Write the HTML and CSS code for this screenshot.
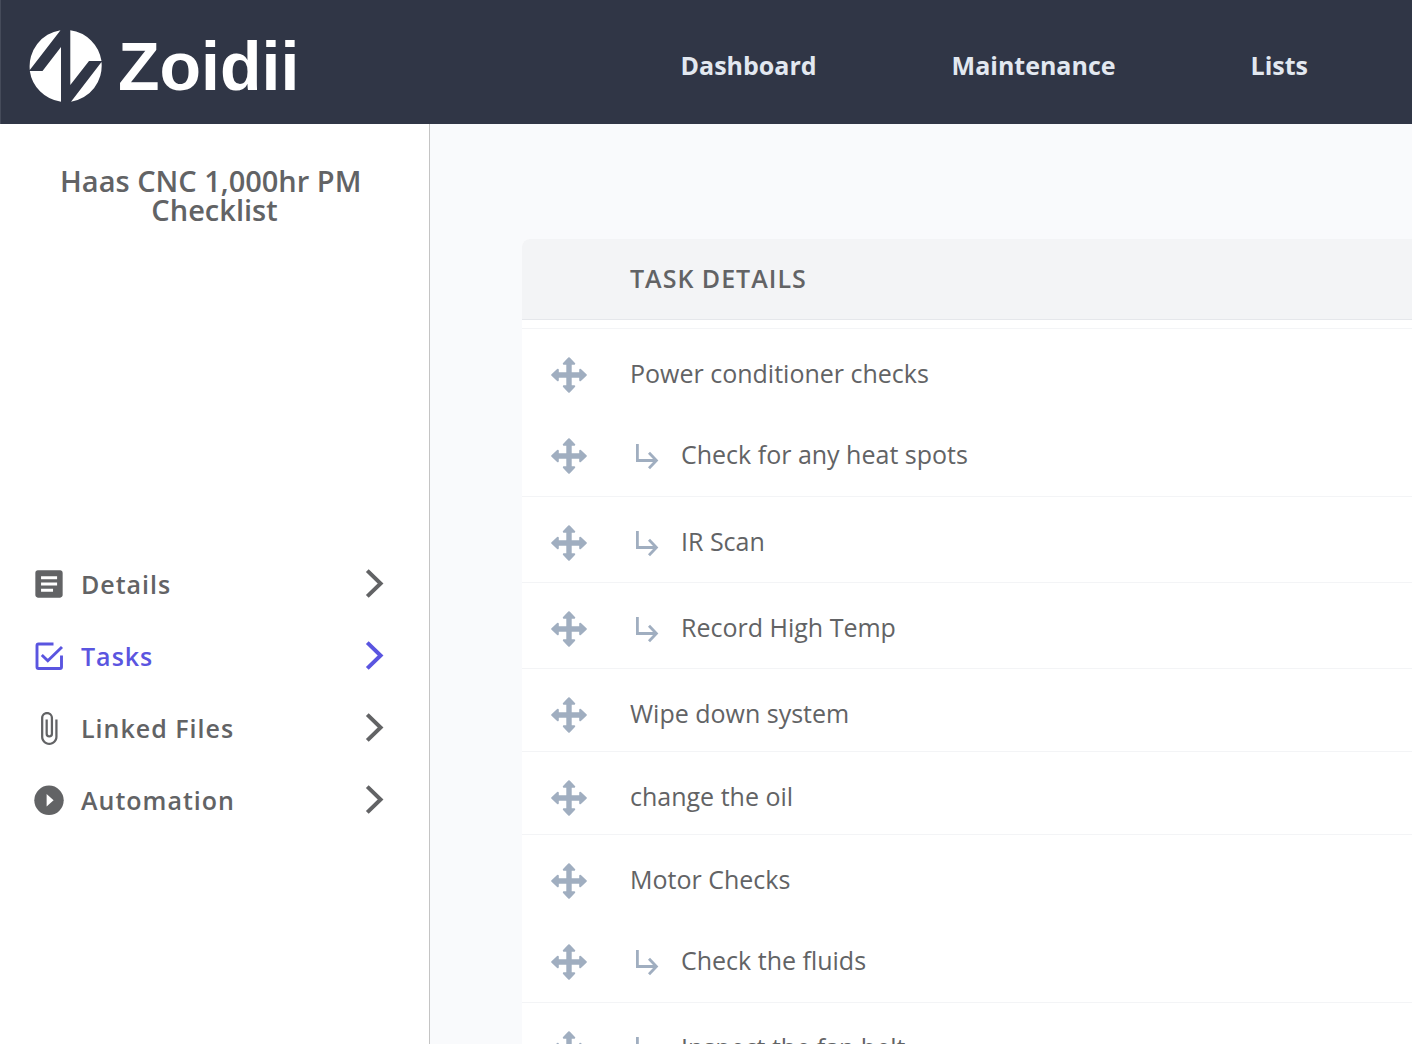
FILE: index.html
```html
<!DOCTYPE html>
<html lang="en">
<head>
  <meta charset="UTF-8" />
  <meta name="viewport" content="width=device-width, initial-scale=1.0" />
  <title>Zoidii - Tasks</title>
  <link rel="stylesheet" href="styles.css">
</head>
<body>
  <!-- shared icons -->
  <svg class="sprite" aria-hidden="true">
    <symbol id="move" viewBox="0 0 36 36">
      <path d="M18 3v30M3 18h30" fill="none" stroke="currentColor" stroke-width="5.4"/>
      <path d="M18 1.2l5.2 5.6H12.8zM18 34.8l5.2-5.6H12.8zM1.2 18l5.6 5.2V12.8zM34.8 18l-5.6 5.2V12.8z" fill="currentColor" stroke="currentColor" stroke-width="2" stroke-linejoin="round"/>
    </symbol>
    <symbol id="sub" viewBox="0 0 24 28">
      <path d="M2.4 1v16.5H20.6M14 9.8l7.4 7.7-7.4 7.7" fill="none" stroke="currentColor" stroke-width="2.8"/>
    </symbol>
    <symbol id="chevron" viewBox="0 0 20 30">
      <path d="M2.3 1.6L15.6 14.5 2.3 27.4" fill="none" stroke="currentColor" stroke-width="4"/>
    </symbol>
  </svg>

  <header class="topbar">
    <a class="logo" href="#">
      <svg class="logo-mark" viewBox="0 0 73 72" aria-hidden="true">
        <path d="M31.5 .2L.8 40A36.5 36.5 0 0 1 31.5 .2zM.8 41H13.5L32 17V71.8A36.5 36.5 0 0 1 .8 41zM41.3 .2A36.5 36.5 0 0 1 72.5 31H60L41.3 55zM72.5 32A36.5 36.5 0 0 1 42 71.8z" fill="#fff"/>
      </svg>
      <span>Zoidii</span>
    </a>
    <nav class="topnav">
      <a href="#">Dashboard</a>
      <a href="#">Maintenance</a>
      <a href="#">Lists</a>
    </nav>
  </header>

  <div class="layout">
    <aside class="sidebar">
      <h1>Haas CNC 1,000hr PM&nbsp; Checklist</h1>
      <nav class="sidenav">
        <a href="#">
          <svg class="icon" viewBox="0 0 24 24"><path d="M19.4 2.9H4.6C3.6 2.9 2.9 3.6 2.9 4.6v14.8c0 1 .7 1.7 1.7 1.7h14.8c1 0 1.7-.7 1.7-1.7V4.6c0-1-.7-1.7-1.7-1.7zM14.7 17.2H6.7v-2h8zM17.4 13H6.7v-2h10.7zM17.4 8.8H6.7v-2h10.7z" fill="currentColor"/></svg>
          <span>Details</span>
          <svg class="chevron"><use href="#chevron"/></svg>
        </a>
        <a href="#" class="active">
          <svg class="icon" viewBox="0 0 36 36"><path d="M22.5 6H7.5Q6 6 6 7.5V29q0 1.5 1.5 1.5H29q1.5 0 1.5-1.5V17.5M10.8 17l6 5.8L31 9" fill="none" stroke="currentColor" stroke-width="2.9"/></svg>
          <span>Tasks</span>
          <svg class="chevron"><use href="#chevron"/></svg>
        </a>
        <a href="#">
          <svg class="icon" viewBox="0.3 -0.3 24 24"><path d="M16.5 6v11.5c0 2.21-1.79 4-4 4s-4-1.79-4-4V5a2.5 2.5 0 0 1 5 0v10.5c0 .55-.45 1-1 1s-1-.45-1-1V6H10v9.5a2.5 2.5 0 0 0 5 0V5c0-2.21-1.79-4-4-4S7 2.79 7 5v12.5c0 3.04 2.46 5.5 5.5 5.5s5.5-2.46 5.5-5.5V6z" fill="currentColor"/></svg>
          <span>Linked Files</span>
          <svg class="chevron"><use href="#chevron"/></svg>
        </a>
        <a href="#">
          <svg class="icon" viewBox="0 0 36 36"><circle cx="18" cy="18.3" r="14.7" fill="currentColor"/><path d="M15.6 12l7 6.3-7 6.3z" fill="#fff"/></svg>
          <span>Automation</span>
          <svg class="chevron"><use href="#chevron"/></svg>
        </a>
      </nav>
    </aside>

    <main class="content">
      <table class="tasks">
        <thead>
          <tr><th class="handle"></th><th>TASK DETAILS</th></tr>
        </thead>
        <tbody>
          <tr class="spacer"><td colspan="2"></td></tr>
          <tr class="parent">
            <td class="handle"><svg class="move"><use href="#move"/></svg></td>
            <td>Power conditioner checks</td>
          </tr>
          <tr class="child">
            <td class="handle"><svg class="move"><use href="#move"/></svg></td>
            <td><div class="subtask"><svg class="sub"><use href="#sub"/></svg>Check for any heat spots</div></td>
          </tr>
          <tr class="child">
            <td class="handle"><svg class="move"><use href="#move"/></svg></td>
            <td><div class="subtask"><svg class="sub"><use href="#sub"/></svg>IR Scan</div></td>
          </tr>
          <tr class="child">
            <td class="handle"><svg class="move"><use href="#move"/></svg></td>
            <td><div class="subtask"><svg class="sub"><use href="#sub"/></svg>Record High Temp</div></td>
          </tr>
          <tr>
            <td class="handle"><svg class="move"><use href="#move"/></svg></td>
            <td>Wipe down system</td>
          </tr>
          <tr>
            <td class="handle"><svg class="move"><use href="#move"/></svg></td>
            <td>change the oil</td>
          </tr>
          <tr class="parent">
            <td class="handle"><svg class="move"><use href="#move"/></svg></td>
            <td>Motor Checks</td>
          </tr>
          <tr class="child">
            <td class="handle"><svg class="move"><use href="#move"/></svg></td>
            <td><div class="subtask"><svg class="sub"><use href="#sub"/></svg>Check the fluids</div></td>
          </tr>
          <tr class="child">
            <td class="handle"><svg class="move"><use href="#move"/></svg></td>
            <td><div class="subtask"><svg class="sub"><use href="#sub"/></svg>Inspect the fan belt</div></td>
          </tr>
        </tbody>
      </table>
    </main>
  </div>
</body>
</html>
```
FILE: styles.css
```css
* { box-sizing: border-box; }
body { margin: 0; height: 100vh; display: flex; flex-direction: column; overflow: hidden; font-family: "Open Sans", "Noto Sans", sans-serif; font-size: 25px; color: #626365; background: #f9fafc; }
a { color: inherit; text-decoration: none; }
svg { display: block; flex: none; }
.sprite { display: none; }

/* top bar */
.topbar { display: flex; flex: none; align-items: center; justify-content: space-between; height: 124px; padding: 0 104px 0 28px; background: #303646; border-left: 1px solid #454b5a; }
.logo { display: flex; align-items: center; gap: 16px; margin-top: 8px; color: #fff; font-family: "Liberation Sans", Arial, sans-serif; font-size: 68px; font-weight: 700; line-height: 72px; }
.logo-mark { width: 73px; height: 72px; }
.topnav { display: flex; gap: 135px; margin-top: 6px; color: #e2e8f0; font-weight: 700; }

.layout { display: flex; flex: 1; min-height: 0; }

/* sidebar */
.sidebar { flex: none; width: 430px; padding-top: 42px; background: #fff; border-right: 1px solid #c4c4c4; }
.sidebar h1 { margin: 0; padding: 0 48px; font-size: 29px; font-weight: 600; line-height: 29px; text-align: center; }
.sidenav { margin-top: 324px; padding: 0 44px 0 31px; }
.sidenav a { display: flex; align-items: center; height: 72px; font-weight: 600; letter-spacing: 1px; }
.sidenav .active { color: #5a55e0; }
.sidenav span { flex: 1; margin-left: 14px; }
.icon { width: 36px; height: 36px; }
.chevron { width: 20px; height: 30px; }

/* task list */
.content { flex: 1; min-width: 0; padding: 115px 0 0 92px; overflow: hidden; }
.tasks { width: 100%; border-spacing: 0; background: #fff; border-top-left-radius: 8px; overflow: hidden; }
.tasks th { height: 81px; padding: 0 0 2px; background: #f3f4f6; border-bottom: 1px solid #e5e7eb; font-weight: 600; letter-spacing: 1px; text-align: left; }
.tasks td { padding: 28px 0 18px; border-bottom: 1px solid #f3f4f6; line-height: 32px; vertical-align: top; }
.tasks .spacer td { height: 9px; padding: 0; }
.tasks .parent td { padding-bottom: 17px; border-bottom: 0; }
.tasks .child td { padding-bottom: 21px; }
.tasks .parent + .child td { padding-bottom: 22px; }
.tasks .handle { width: 108px; padding-left: 29px; }
.move { width: 36px; height: 36px; color: #a0aec0; }
.subtask { display: flex; gap: 22px; padding-left: 5px; }
.sub { width: 24px; height: 28px; margin-top: 5px; color: #a0aec0; }
```
